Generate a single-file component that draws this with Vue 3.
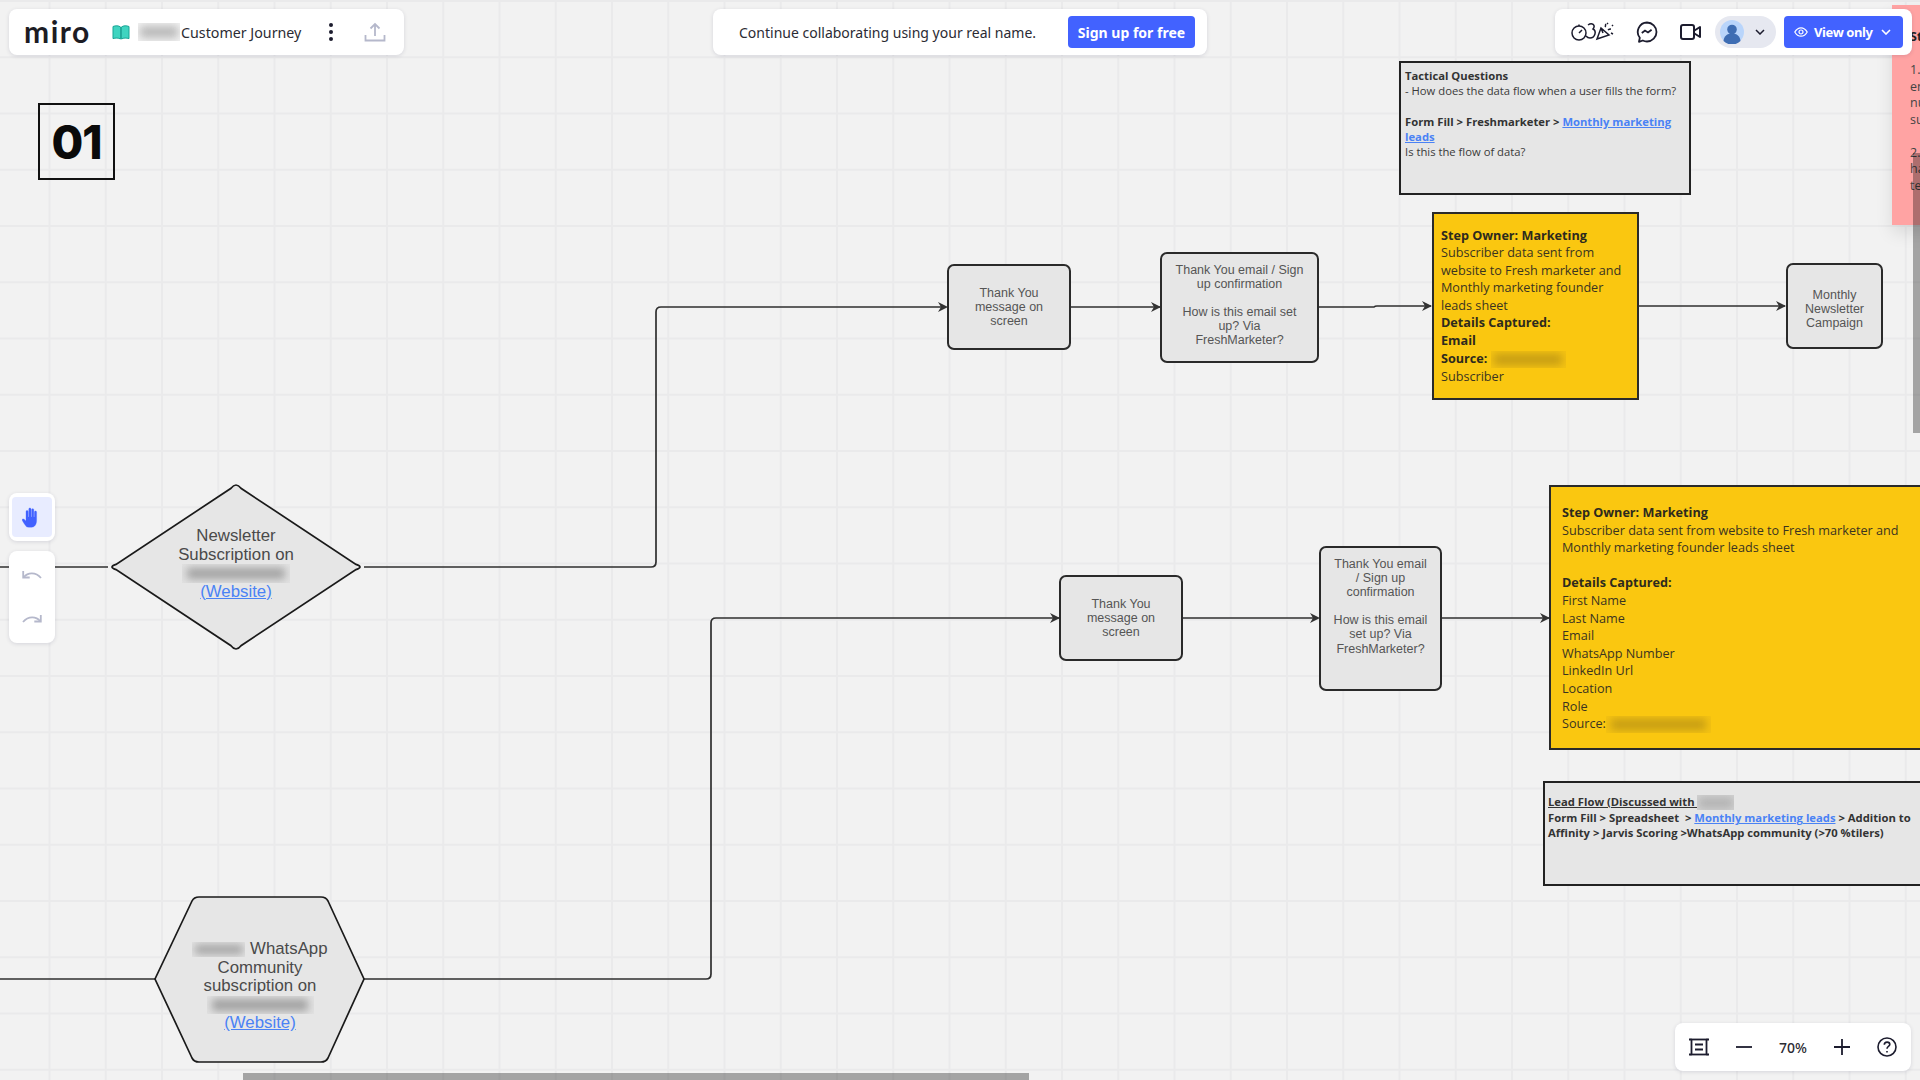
<script setup>
// connectors of the flow chart, in board pixels
const lines = [
  'M0 567H108',
  'M364 567H651Q656 567 656 562V312Q656 307 661 307H946',
  'M1071 307H1160',
  'M1319 307H1374Q1375 306 1377 306H1431',
  'M1638 306H1785',
  'M0 979H155',
  'M364 979H706Q711 979 711 974V623Q711 618 716 618H1059',
  'M1183 618H1318',
  'M1442 618H1549'
]
// arrow tips: [x, y] of the point
const arrows = [
  [948, 307],
  [1161, 307],
  [1432, 306],
  [1786, 306],
  [1060, 618],
  [1320, 618],
  [1550, 618]
]
const arrowPath = ([x, y]) => `M${x} ${y}L${x - 10} ${y - 5}L${x - 7} ${y}L${x - 10} ${y + 5}Z`
</script>

<template>
  <div class="board">
    <svg class="links" width="1920" height="1080" viewBox="0 0 1920 1080">
      <path v-for="d in lines" :key="d" :d="d" class="link" />
      <path v-for="a in arrows" :key="a.join()" :d="arrowPath(a)" class="tip" />
      <path
        class="shape"
        d="M231 488.300Q236 481.700 241 488.300L356 564.400Q364 567 356 569.600L241 645.700Q236 652.300 231 645.700L116 569.600Q108 567 116 564.400Z"
      />
      <path
        class="shape"
        d="M199 897H321Q326 897 328 901L364 979L328 1058Q326 1062 321 1062H199Q194 1062 192 1058L155 979L192 901Q194 897 199 897Z"
      />
    </svg>

    <div class="step-number">01</div>

    <div class="shape-label diamond-label">
      <div>Newsletter</div>
      <div>Subscription on</div>
      <div><span class="redact r-diamond"></span></div>
      <a class="link-text">(Website)</a>
    </div>
    <div class="shape-label hex-label">
      <div><span class="redact r-hex1"></span> WhatsApp</div>
      <div>Community</div>
      <div>subscription on</div>
      <div><span class="redact r-hex2"></span></div>
      <a class="link-text">(Website)</a>
    </div>

    <div class="node thanks-a">Thank You<br />message on<br />screen</div>
    <div class="node email-a">
      Thank You email / Sign<br />up confirmation<br /><br />How is this email set<br />up? Via<br />FreshMarketer?
    </div>
    <div class="node monthly">Monthly<br />Newsletter<br />Campaign</div>
    <div class="node thanks-b">Thank You<br />message on<br />screen</div>
    <div class="node email-b">
      Thank You email<br />/ Sign up<br />confirmation<br /><br />How is this email<br />set up? Via<br />FreshMarketer?
    </div>

    <div class="note tactical">
      <b>Tactical Questions</b><br />
      - How does the data flow when a user fills the form?<br /><br />
      <b>Form Fill &gt; Freshmarketer &gt; <a class="link-text">Monthly marketing leads</a></b><br />
      Is this the flow of data?
    </div>

    <div class="yellow yellow-a">
      <b>Step Owner: Marketing</b><br />
      Subscriber data sent from<br />website to Fresh marketer and<br />Monthly marketing founder<br />leads sheet<br />
      <b>Details Captured:</b><br />
      <b>Email</b><br />
      <b>Source:</b> <span class="redact r-source-a"></span><br />
      Subscriber
    </div>

    <div class="yellow yellow-b">
      <b>Step Owner: Marketing</b><br />
      Subscriber data sent from website to Fresh marketer and<br />Monthly marketing founder leads sheet<br /><br />
      <b>Details Captured:</b><br />
      First Name<br />Last Name<br />Email<br />WhatsApp Number<br />LinkedIn Url<br />Location<br />Role<br />
      Source:<span class="redact r-source-b"></span>
    </div>

    <div class="note lead-flow">
      <b class="lead-title">Lead Flow (Discussed with </b><span class="redact r-lead"></span><br />
      <b>Form Fill &gt; Spreadsheet &nbsp;&gt; <a class="link-text">Monthly marketing leads</a> &gt; Addition to<br />
      Affinity &gt; Jarvis Scoring &gt;WhatsApp community (&gt;70 %tilers)</b>
    </div>

    <div class="sticky">
      <b>St</b><br /><br />1.<br />en<br />nu<br />su<br /><br />2.<br />ha<br />te
    </div>

    <header class="topbar">
      <div class="panel board-panel">
        <span class="logo">miro</span>
        <svg class="book" width="18" height="15" viewBox="0 0 18 15">
          <path d="M1 1.500C3.500 .5 6.500 .5 8.600 2V14C6.500 12.800 3.500 12.800 1 13.600Z" fill="#3fd4c0" stroke="#19a596" />
          <path d="M17 1.500C14.500 .5 11.500 .5 9.400 2V14C11.500 12.800 14.500 12.800 17 13.600Z" fill="#3fd4c0" stroke="#19a596" />
        </svg>
        <span class="redact r-title"></span>
        <span class="board-name">Customer Journey</span>
        <svg class="dots" width="4" height="18" viewBox="0 0 4 18">
          <circle cx="2" cy="2" r="2" /><circle cx="2" cy="9" r="2" /><circle cx="2" cy="16" r="2" />
        </svg>
        <svg class="share" width="22" height="20" viewBox="0 0 22 20">
          <path d="M11 14V2M6.500 6.500L11 2l4.500 4.500M1.500 13v5.500h19V13" fill="none" stroke="#b5b8cb" stroke-width="1.800" />
        </svg>
      </div>

      <div class="panel signup-panel">
        <span>Continue collaborating using your real name.</span>
        <button class="primary signup">Sign up for free</button>
      </div>

      <div class="panel actions-panel">
        <svg class="collab" width="44" height="24" viewBox="0 0 44 24" fill="none" stroke="#1c1c2e" stroke-width="1.500">
          <circle cx="8" cy="13" r="7" />
          <path d="M8 13l3-3M8 4.500V6" />
          <path d="M17 5c4-3 8 0 5 4 4 2 2 9-3 9-2 0-3-.8-4-2" />
          <path d="M26 19l4-11 8 7zM30 8l2 5M34 7c1-1 0-2 1-3M37 10c1-1 2-1 3-1M36 3l1 1M41 5l1 1M40 13l2 1" />
        </svg>
        <svg class="chat" width="22" height="22" viewBox="0 0 22 22" fill="none" stroke="#1c1c2e" stroke-width="1.800">
          <path d="M11 1.500a9.500 9.500 0 0 1 0 19c-1.500 0-3-.4-4.200-1L3 20.800l.8-4A9.500 9.500 0 0 1 11 1.500z" stroke-linejoin="round" />
          <path d="M5.800 12l3.200-2.500 3 2 3.600-2.800" />
        </svg>
        <svg class="video" width="21" height="16" viewBox="0 0 21 16" fill="none" stroke="#1c1c2e" stroke-width="2">
          <rect x="1" y="1" width="13" height="14" rx="2" />
          <path d="M14.500 6.500L20 3v10l-5.500-3.500" stroke-linejoin="round" />
        </svg>
        <div class="user-pill">
          <svg width="24" height="24" viewBox="0 0 24 24">
            <circle cx="12" cy="12" r="12" fill="#b9d5fb" />
            <circle cx="12" cy="9.500" r="4.800" fill="#3e6db3" />
            <path d="M3.500 21c.5-5 3.500-7.500 8.500-7.500s8 2.500 8.500 7.500a12 12 0 0 1-17 0z" fill="#3e6db3" />
          </svg>
          <svg class="chev" width="10" height="6" viewBox="0 0 10 6">
            <path d="M1 1l4 4 4-4" fill="none" stroke="#1c1c2e" stroke-width="1.500" />
          </svg>
        </div>
        <button class="primary view-only">
          <svg width="14" height="10" viewBox="0 0 14 10" fill="none" stroke="#fff" stroke-width="1.200">
            <path d="M.8 5C2.500 2 4.500 .8 7 .8S11.500 2 13.200 5C11.500 8 9.500 9.200 7 9.200S2.500 8 .8 5z" />
            <circle cx="7" cy="5" r="2" />
          </svg>
          <span>View only</span>
          <svg width="10" height="6" viewBox="0 0 10 6">
            <path d="M1 1l4 4 4-4" fill="none" stroke="#fff" stroke-width="1.600" />
          </svg>
        </button>
      </div>
    </header>

    <aside class="side-tools">
      <div class="panel tool-panel hand-panel">
        <div class="tool-active">
          <svg width="20" height="21" viewBox="0 0 20 21" fill="#4262ff" stroke="#4262ff" stroke-width=".3">
            <path d="M4.500 19.800C2.500 17.500 1.500 15.500 .3 13.600c-.5-.9 0-1.700.9-1.700.7 0 1.300.4 2.800 2V4.500c0-1.500 2-1.500 2.200 0V10h.6V2c0-1.500 2.200-1.500 2.200 0v8h.6V2.800c0-1.500 2.200-1.500 2.200 0V10h.6V5c0-1.500 2.200-1.500 2.200 0v8.500c0 3.500-1.800 6.700-5 6.700H6.800c-1 0-1.700-.1-2.300-.4z" />
          </svg>
        </div>
      </div>
      <div class="panel tool-panel history-panel">
        <svg width="20" height="11" viewBox="0 0 20 11" fill="none" stroke="#b5b8cb" stroke-width="1.800">
          <path d="M1.200 1v6.500h6.500" />
          <path d="M1.800 7.200C5.500 2.500 13.500 1.500 19 8" />
        </svg>
        <svg width="20" height="11" viewBox="0 0 20 11" fill="none" stroke="#b5b8cb" stroke-width="1.800">
          <path d="M18.800 1v6.500h-6.500" />
          <path d="M18.200 7.200C14.500 2.500 6.500 1.500 1 8" />
        </svg>
      </div>
    </aside>

    <div class="panel zoom-panel">
      <svg width="20" height="20" viewBox="0 0 20 20" fill="none" stroke="#1c1c2e" stroke-width="1.800">
        <rect x="2.500" y="2.500" width="15" height="15" />
        <path d="M0 2.500h2.500M17.500 2.500H20M0 17.500h2.500M17.500 17.500H20M6 7.500h8M6 12.500h8" />
      </svg>
      <svg width="16" height="2" viewBox="0 0 16 2"><path d="M0 1h16" stroke="#1c1c2e" stroke-width="1.800" /></svg>
      <span class="zoom-value">70%</span>
      <svg width="16" height="16" viewBox="0 0 16 16"><path d="M0 8h16M8 0v16" stroke="#1c1c2e" stroke-width="1.800" /></svg>
      <svg width="20" height="20" viewBox="0 0 20 20" fill="none" stroke="#1c1c2e" stroke-width="1.600">
        <circle cx="10" cy="10" r="9" />
        <path d="M7.300 7.800c0-1.700 1.200-2.700 2.800-2.700s2.700 1 2.700 2.300c0 2-2.800 2-2.800 4.300" />
        <path d="M10 14v1.500" />
      </svg>
    </div>

    <div class="scroll scroll-v"></div>
    <div class="scroll scroll-h"></div>
  </div>
</template>

<style scoped>
.board {
  position: relative;
  width: 1920px;
  height: 1080px;
  overflow: hidden;
  background-color: #f2f2f2;
  background-image:
    linear-gradient(to right, #eaeaeb 1.500px, transparent 1.500px),
    linear-gradient(to bottom, #eaeaeb 1.500px, transparent 1.500px);
  background-size: 56.250px 56.250px;
  background-position: 48.500px 0;
  font-family: "Open Sans", "Noto Sans", sans-serif;
}

.links {
  position: absolute;
  left: 0;
  top: 0;
}

.link {
  fill: none;
  stroke: #2f2f2f;
  stroke-width: 1.700;
}

.tip {
  fill: #333;
}

.shape {
  fill: #e6e6e6;
  stroke: #1a1a1a;
  stroke-width: 1.700;
}

.step-number {
  position: absolute;
  left: 38px;
  top: 103px;
  box-sizing: border-box;
  width: 77px;
  height: 77px;
  border: 2px solid #111;
  display: flex;
  align-items: center;
  justify-content: center;
  font-family: Inter, sans-serif;
  font-weight: 800;
  font-size: 46px;
  letter-spacing: -1px;
  color: #0a0a0a;
}

.shape-label {
  position: absolute;
  text-align: center;
  font-family: "Liberation Sans", Arial, sans-serif;
  font-size: 16.800px;
  line-height: 18.500px;
  color: #4a4a4a;
}

.diamond-label {
  left: 136px;
  top: 527px;
  width: 200px;
}

.hex-label {
  left: 160px;
  top: 940px;
  width: 200px;
}

.link-text {
  color: #4a82f5;
  text-decoration: underline;
}

.node {
  position: absolute;
  box-sizing: border-box;
  text-align: center;
  background: #e6e6e6;
  border: 2px solid #2a2a2a;
  border-radius: 7px;
  font-family: "Liberation Sans", Arial, sans-serif;
  font-size: 12.500px;
  line-height: 14.100px;
  color: #555;
  padding: 10px 3px;
}

.thanks-a {
  left: 947px;
  top: 264px;
  width: 124px;
  height: 86px;
  padding-top: 20px;
}

.email-a {
  left: 1160px;
  top: 252px;
  width: 159px;
  height: 111px;
  padding-top: 9px;
}

.monthly {
  left: 1786px;
  top: 263px;
  width: 97px;
  height: 86px;
  padding-top: 23px;
}

.thanks-b {
  left: 1059px;
  top: 575px;
  width: 124px;
  height: 86px;
  padding-top: 20px;
}

.email-b {
  left: 1319px;
  top: 546px;
  width: 123px;
  height: 145px;
  padding-top: 9px;
}

.note {
  position: absolute;
  box-sizing: border-box;
  background: #e6e6e6;
  border: 2px solid #222;
  color: #3a3a3a;
  font-size: 11.250px;
  line-height: 15.300px;
}

.note b {
  font-weight: 700;
  color: #333;
}

.note .link-text {
  color: #4a82f5;
}

.tactical {
  left: 1399px;
  top: 61px;
  width: 292px;
  height: 134px;
  padding: 5px 4px;
}

.lead-flow {
  left: 1543px;
  top: 781px;
  width: 420px;
  height: 105px;
  padding: 11px 3px;
  line-height: 15px;
}

.lead-title {
  text-decoration: underline;
}

.yellow {
  position: absolute;
  box-sizing: border-box;
  background: #fac710;
  border: 2px solid #2a2a2a;
  color: #3a3420;
  font-size: 12.650px;
  line-height: 17.600px;
}

.yellow b {
  color: #2d2a1e;
}

.yellow-a {
  left: 1432px;
  top: 212px;
  width: 207px;
  height: 188px;
  padding: 12.500px 7px;
}

.yellow-b {
  left: 1549px;
  top: 485px;
  width: 420px;
  height: 265px;
  padding: 17px 11px;
}

.sticky {
  position: absolute;
  left: 1892px;
  top: 5px;
  width: 200px;
  height: 220px;
  box-sizing: border-box;
  padding: 24px 18px;
  background: #ffa3a3;
  box-shadow: 0 8px 16px rgba(0, 0, 0, 0.1);
  color: #444;
  font-size: 12.500px;
  line-height: 16.500px;
}

.sticky b {
  color: #222;
}

.redact {
  position: relative;
  display: inline-block;
  overflow: hidden;
  vertical-align: middle;
  background: #e2e2e2;
}

.redact::before {
  content: "";
  position: absolute;
  inset: 18% 5%;
  background: #a0a0a0;
  filter: blur(4px);
}

.r-diamond {
  width: 108px;
  height: 18.500px;
}

.r-hex1 {
  width: 53px;
  height: 15px;
}

.r-hex2 {
  width: 107px;
  height: 18.500px;
}

.r-source-a {
  width: 75px;
  height: 17px;
  background: #f5c312;
}

.r-source-a::before,
.r-source-b::before {
  background: #c59c14;
}

.r-source-b {
  width: 105px;
  height: 17px;
  background: #f5c312;
}

.r-lead {
  width: 37px;
  height: 15px;
  background: #d2d2d2;
}

.r-lead::before {
  background: #b0b0b0;
}

.r-title {
  width: 42px;
  height: 18px;
  margin-left: 8px;
  background: #f3f3f3;
}

.r-title::before {
  background: #b8b8b8;
}

.panel {
  background: #fff;
  border-radius: 8px;
  box-shadow: 0 1px 4px rgba(5, 0, 56, 0.12);
  box-sizing: border-box;
}

.topbar {
  position: absolute;
  left: 9px;
  top: 9px;
  right: 8px;
  display: flex;
  font-family: "Noto Sans", sans-serif;
  font-size: 14px;
  color: #2b2b33;
}

.board-panel,
.signup-panel,
.actions-panel {
  display: flex;
  align-items: center;
  height: 46px;
}

.board-panel {
  width: 395px;
  padding-left: 15px;
}

.logo {
  width: 88px;
  font-family: Lato, sans-serif;
  font-weight: 700;
  font-size: 30px;
  line-height: 1;
  margin-top: -3px;
  letter-spacing: 1.500px;
  color: #1c1c24;
}

.board-name {
  margin-left: 1px;
  font-size: 14.250px;
  white-space: nowrap;
}

.dots {
  margin-left: 28px;
  fill: #1c1c2e;
}

.share {
  margin-left: 31px;
}

.signup-panel {
  width: 494px;
  margin-left: 309px;
  padding: 0 12px 0 26px;
  justify-content: space-between;
}

.primary {
  border: none;
  border-radius: 4px;
  background: #4262ff;
  color: #fff;
  font-family: "Noto Sans", sans-serif;
  font-size: 14px;
  font-weight: 700;
  height: 32px;
}

.signup {
  width: 127px;
  padding: 0;
}

.actions-panel {
  width: 357px;
  margin-left: auto;
  padding-left: 16px;
}

.chat {
  margin-left: 21px;
}

.video {
  margin-left: 22px;
}

.user-pill {
  display: flex;
  align-items: center;
  width: 61px;
  height: 32px;
  margin-left: 14px;
  padding-left: 5px;
  box-sizing: border-box;
  border-radius: 16px;
  background: #e6e8f0;
}

.chev {
  margin-left: 11px;
}

.view-only {
  display: flex;
  align-items: center;
  justify-content: flex-start;
  width: 119px;
  margin-left: 8px;
  padding: 0 0 0 10px;
  font-size: 13px;
  letter-spacing: -0.4px;
  white-space: nowrap;
}

.view-only span {
  margin: 0 8px 0 6px;
}

.side-tools {
  position: absolute;
  left: 9px;
  top: 493px;
  display: flex;
  flex-direction: column;
  gap: 10px;
}

.tool-panel {
  width: 46px;
}

.hand-panel {
  height: 48px;
  padding: 4px 3px;
}

.tool-active {
  display: flex;
  align-items: center;
  justify-content: center;
  height: 40px;
  border-radius: 4px;
  background: #e8ecff;
}

.history-panel {
  height: 92px;
  display: flex;
  flex-direction: column;
  align-items: center;
  justify-content: center;
  gap: 33px;
}

.zoom-panel {
  position: absolute;
  left: 1675px;
  top: 1023px;
  width: 236px;
  height: 48px;
  padding: 0 14px;
  display: flex;
  align-items: center;
  justify-content: space-between;
  font-family: "Noto Sans", sans-serif;
  font-size: 14px;
  font-weight: 500;
  color: #2b2b33;
}

.zoom-value {
  width: 29px;
  text-align: center;
  white-space: nowrap;
}

.scroll {
  position: absolute;
  background: rgba(0, 0, 0, 0.32);
}

.scroll-v {
  left: 1913px;
  top: 153px;
  width: 7px;
  height: 280px;
}

.scroll-h {
  left: 243px;
  top: 1073px;
  width: 786px;
  height: 7px;
}
</style>
